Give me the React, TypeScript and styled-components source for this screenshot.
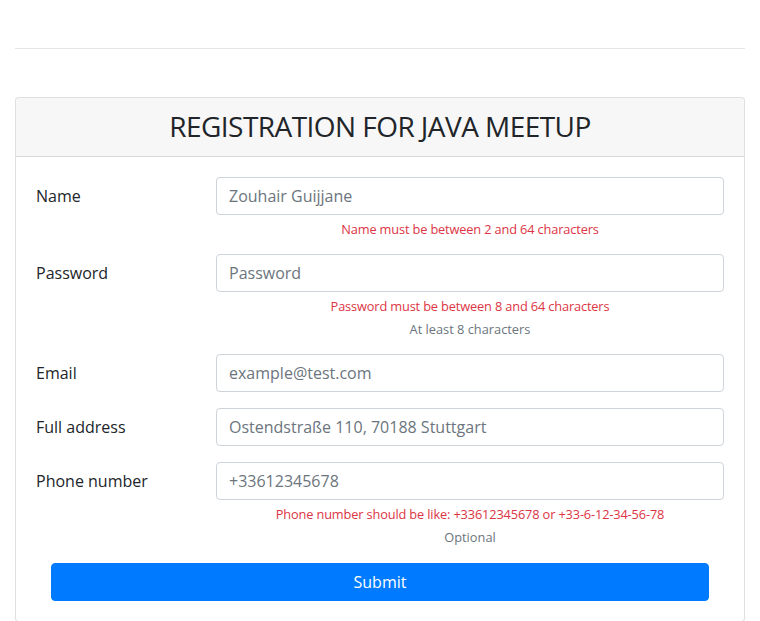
import React, { FC } from 'react';
import styled, { createGlobalStyle } from 'styled-components';

const GlobalStyle = createGlobalStyle`
  * { box-sizing: border-box; }
  body {
    margin: 0;
    background: #fff;
    color: #212529;
    font-family: "Open Sans", "Noto Sans", sans-serif;
    font-size: 16px;
    line-height: 1.5;
  }
`;

type Field = {
  label: string;
  placeholder: string;
  type?: string;
  error?: string;
  hint?: string;
};

const fields: Field[] = [
  { label: 'Name', placeholder: 'Zouhair Guijjane', error: 'Name must be between 2 and 64 characters' },
  {
    label: 'Password',
    placeholder: 'Password',
    type: 'password',
    error: 'Password must be between 8 and 64 characters',
    hint: 'At least 8 characters',
  },
  { label: 'Email', placeholder: 'example@test.com', type: 'email' },
  { label: 'Full address', placeholder: 'Ostendstraße 110, 70188 Stuttgart' },
  {
    label: 'Phone number',
    placeholder: '+33612345678',
    error: 'Phone number should be like: +33612345678 or +33-6-12-34-56-78',
    hint: 'Optional',
  },
];

const App: FC = () => {
  return (
    <Container>
      <GlobalStyle />
      <Rule />
      <Card>
        <CardHeader>
          <Title>REGISTRATION FOR JAVA MEETUP</Title>
        </CardHeader>
        <CardBody>
          <form onSubmit={(e) => e.preventDefault()}>
            {fields.map((f) => (
              <FormRow key={f.label}>
                <Label>{f.label}</Label>
                <div>
                  <Input type={f.type || 'text'} placeholder={f.placeholder} />
                  {f.error && <Feedback>{f.error}</Feedback>}
                  {f.hint && <Hint>{f.hint}</Hint>}
                </div>
              </FormRow>
            ))}
            <ButtonRow>
              <SubmitButton type="submit">Submit</SubmitButton>
            </ButtonRow>
          </form>
        </CardBody>
      </Card>
    </Container>
  );
};

const Container = styled.div`
  padding: 0 15px;
`;

const Rule = styled.hr`
  margin: 48px 0 48px;
  border: 0;
  border-top: 1px solid rgba(0, 0, 0, 0.1);
`;

const Card = styled.div`
  border: 1px solid rgba(0, 0, 0, 0.125);
  border-radius: 4px;
  background: #fff;
`;

const CardHeader = styled.div`
  padding: 12px 20px;
  background-color: rgba(0, 0, 0, 0.03);
  border-bottom: 1px solid rgba(0, 0, 0, 0.125);
  border-radius: 3px 3px 0 0;
`;

const Title = styled.h3`
  margin: 0;
  font-size: 28px;
  font-weight: 400;
  line-height: 1.2;
  letter-spacing: -0.55px;
  text-align: center;
  color: #212529;
`;

const CardBody = styled.div`
  padding: 20px;
`;

const FormRow = styled.div`
  display: grid;
  grid-template-columns: 180px 1fr;
  margin-bottom: 16px;
`;

const Label = styled.label`
  padding-top: 7px;
  padding-bottom: 7px;
  font-size: 16px;
  line-height: 1.5;
`;

const Input = styled.input`
  display: block;
  width: 100%;
  height: 38px;
  padding: 6px 12px;
  font-family: inherit;
  font-size: 16px;
  line-height: 1.5;
  color: #495057;
  background: #fff;
  border: 1px solid #ced4da;
  border-radius: 4px;
  outline: none;

  &::placeholder {
    color: #6c757d;
    opacity: 1;
  }
`;

const Feedback = styled.div`
  margin-top: 5px;
  margin-bottom: -1px;
  font-size: 12.8px;
  line-height: 1.5;
  letter-spacing: -0.15px;
  color: #dc3545;
  text-align: center;
`;

const Hint = styled.small`
  display: block;
  margin-top: 5px;
  margin-bottom: -1px;
  font-size: 12.8px;
  line-height: 1.5;
  color: #6c757d;
  text-align: center;
`;

const ButtonRow = styled.div`
  padding: 0 15px;
`;

const SubmitButton = styled.button`
  display: block;
  width: 100%;
  height: 38px;
  padding: 6px 12px;
  font-family: inherit;
  font-size: 16px;
  line-height: 1.5;
  color: #fff;
  background-color: #007bff;
  border: 1px solid #007bff;
  border-radius: 4px;
  cursor: pointer;
`;

export default App;
